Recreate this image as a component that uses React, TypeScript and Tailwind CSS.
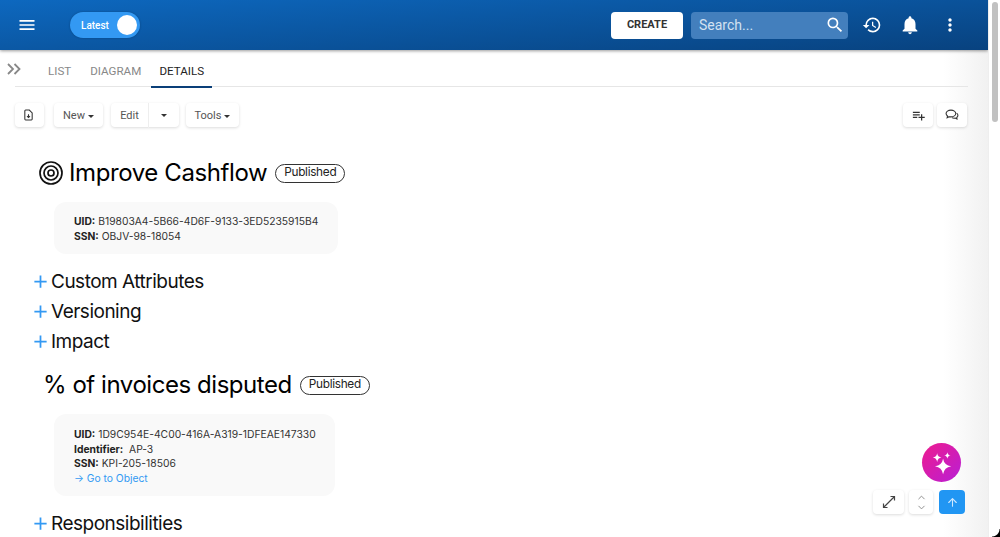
import React from "react";
import { ChevronUp, ChevronDown, ArrowUp } from "lucide-react";
import { MdMenu, MdSearch, MdHistory, MdNotifications, MdMoreVert, MdPlaylistAdd, MdAdd } from "react-icons/md";

const Caret = () => <span className="inline-block w-0 h-0 border-x-[3.5px] border-x-transparent border-t-[3.5px] border-t-[#333]" />;
const Btn = ({ children, className = "" }: { children: React.ReactNode; className?: string }) => (
  <div className={`h-6 flex items-center justify-center bg-white rounded shadow-[0_1px_3px_rgba(0,0,0,0.14)] text-[11px] text-[#555] ${className}`}>{children}</div>
);
const Section = ({ label, className = "" }: { label: string; className?: string }) => (
  <div className={`flex items-center h-[30px] shrink-0 ${className}`}>
    <MdAdd size={21} className="text-[#3399f3] ml-[30px] -mt-[2px]" />
    <span className="text-[19px] tracking-[-0.5px] text-[#111]">{label}</span>
  </div>
);
const Badge = () => (
  <span className="h-[19px] px-2 flex items-center rounded-full border border-[#333] text-[11.8px] tracking-[-0.3px] text-[#222]">Published</span>
);

export default function App() {
  return (
    <div className="relative w-[1000px] h-[537px] overflow-hidden flex bg-white font-['Inter',sans-serif]">
      <div className="w-[988px] flex flex-col bg-[linear-gradient(90deg,#fff_95.5%,#f1f1f1_100%)]">
        <header className="h-[50px] shrink-0 flex items-center bg-[linear-gradient(176deg,#0d68bf_0%,#08427f_100%)] shadow-[0_1px_3px_rgba(0,0,0,0.4)] font-['Roboto',sans-serif]">
          <MdMenu size={20} className="text-white ml-[17px]" />
          <div className="ml-[33px] w-[70px] h-[26px] rounded-full bg-[#3399f3] flex items-center justify-between pl-[11px] pr-[3px] shadow-[0_0_2px_rgba(0,0,0,0.3)]">
            <span className="text-[10px] font-medium text-white">Latest</span>
            <span className="w-5 h-5 rounded-full bg-white" />
          </div>
          <div className="ml-auto w-[72px] h-[27px] rounded bg-white flex items-center justify-center text-[11px] font-bold text-[#333]">CREATE</div>
          <div className="ml-2 w-[157px] h-[27px] rounded bg-[#437fbd] flex items-center justify-between pl-2 pr-[3px]">
            <span className="text-[14px] text-[#d3e2f1]">Search...</span>
            <MdSearch size={20} className="text-white" />
          </div>
          <MdHistory size={20} className="text-white ml-[14px]" />
          <MdNotifications size={22} className="text-white ml-[17px]" />
          <MdMoreVert size={20} className="text-white ml-[19px] mr-[28px]" />
        </header>
        <div className="h-[37px] shrink-0 flex ml-[15px] mr-[20px] border-b border-[#e6e6e6] relative text-[11.6px] font-['Roboto',sans-serif]">
          <svg width="16" height="12" viewBox="0 0 16 12" fill="none" stroke="#888" strokeWidth="1.8" className="absolute left-[-8px] top-[13px]">
            <path d="M1 1l5 5-5 5M7.500 1l5 5-5 5" />
          </svg>
          <div className="ml-[33px] mt-[13px] text-[#888]">LIST</div>
          <div className="ml-[19px] mt-[13px] text-[#888]">DIAGRAM</div>
          <div className="ml-[10px] w-[61px] text-center pt-[13px] text-[#222] border-b-2 border-[#0a3f78] h-[38px]">DETAILS</div>
        </div>
        <div className="flex shrink-0 mt-[16px] ml-[15px] mr-[21px] items-center font-['Roboto',sans-serif]">
          <Btn className="w-[29px]">
            <svg width="9" height="12" viewBox="0 0 11 13" fill="none" stroke="#333" strokeWidth="1.3" className="-ml-[3px]">
              <path d="M1 1.500a1 1 0 0 1 1-1h4.500L10 4v7.500a1 1 0 0 1-1 1H2a1 1 0 0 1-1-1zM5.500 5.500v4M3.700 7.800l1.800 1.800 1.800-1.800" />
            </svg>
          </Btn>
          <Btn className="w-[49px] ml-[10px] gap-[3px] pt-[2px]">New <Caret /></Btn>
          <Btn className="w-[68px] ml-[8px]"><span className="flex-1 text-center border-r border-[#eee] leading-6 pt-px">Edit</span><span className="w-[30px] flex justify-center"><Caret /></span></Btn>
          <Btn className="w-[53px] ml-[7px] gap-[3px] pt-[2px]">Tools <Caret /></Btn>
          <Btn className="w-[30px] ml-auto"><MdPlaylistAdd size={15} className="text-[#333]" /></Btn>
          <Btn className="w-[30px] ml-[4px]">
            <svg width="14" height="13" viewBox="0 0 13 12" fill="none" stroke="#333" strokeWidth="1">
              <path d="M5.500 1C3 1 1 2.400 1 4.200c0 .9.500 1.700 1.300 2.300L2 8l1.800-.9c.5.100 1.100.2 1.700.2 2.500 0 4.500-1.400 4.500-3.100S8 1 5.500 1z" />
              <path d="M10.800 3.800c.8.500 1.200 1.200 1.200 2 0 .8-.4 1.500-1.100 2l.2 1.400-1.600-.8c-1 .2-2.200.1-3.100-.4" />
            </svg>
          </Btn>
        </div>
        <div className="flex shrink-0 items-center mt-[29px] ml-[39px] h-[34px]">
          <svg width="24" height="24" viewBox="0 0 24 24" fill="none" stroke="#111" strokeWidth="1.7">
            <circle cx="12" cy="12" r="11" /><circle cx="12" cy="12" r="7" /><circle cx="12" cy="12" r="3" />
          </svg>
          <h1 className="ml-[6px] text-[24px] tracking-[-0.4px] text-black">Improve Cashflow</h1>
          <span className="ml-2"><Badge /></span>
        </div>
        <div className="shrink-0 mt-[12px] ml-[54px] w-[284px] h-[52px] rounded-xl bg-[#f9f9f9] px-5 py-[12px] text-[10.3px] leading-[14.5px] text-[#333] whitespace-nowrap">
          <div><b className="text-[#222]">UID:</b> B19803A4-5B66-4D6F-9133-3ED5235915B4</div>
          <div><b className="text-[#222]">SSN:</b> OBJV-98-18054</div>
        </div>
        <Section label="Custom Attributes" className="mt-[13px]" />
        <Section label="Versioning" />
        <Section label="Impact" />
        <div className="flex shrink-0 items-center mt-[11px] ml-[43px] h-[34px]">
          <h2 className="text-[24px] tracking-[-0.45px] text-black">% of invoices disputed</h2>
          <span className="ml-[8px]"><Badge /></span>
        </div>
        <div className="shrink-0 mt-[12px] ml-[54px] w-[281px] h-[82px] rounded-xl bg-[#f9f9f9] px-5 pt-[13px] text-[10.3px] leading-[14.5px] text-[#333] whitespace-nowrap">
          <div><b className="text-[#222]">UID:</b> 1D9C954E-4C00-416A-A319-1DFEAE147330</div>
          <div><b className="text-[#222]">Identifier:</b>&nbsp; AP-3</div>
          <div><b className="text-[#222]">SSN:</b> KPI-205-18506</div>
          <div className="text-[#3399f3]">→ Go to Object</div>
        </div>
        <Section label="Responsibilities" className="mt-[13px]" />
      </div>
      <div className="w-[12px] bg-white border-l border-[#eee] relative">
        <div className="absolute left-[3px] top-[2px] w-[6px] h-[120px] rounded bg-[#c1c1c1]" />
      </div>
      <div className="absolute right-0 bottom-0 w-[8px] h-[8px] bg-[radial-gradient(circle_at_0_0,transparent_7px,#000_8px)]" />

      <div className="absolute left-[922px] top-[443px] w-[39px] h-[39px] rounded-full bg-[linear-gradient(135deg,#ee1b8e,#b81fd6)] flex items-center justify-center">
        <svg width="28" height="28" viewBox="0 0 26 26" fill="white">
          <path d="M14 9 Q15 15 21.500 16 Q15 17 14 23.500 Q13 17 6.500 16 Q13 15 14 9Z" />
          <path d="M8.500 4 Q9 7.500 12.500 8 Q9 8.500 8.500 12 Q8 8.500 4.500 8 Q8 7.500 8.500 4Z" />
          <path d="M18 3 Q18.300 5.700 21 6 Q18.300 6.300 18 9 Q17.700 6.300 15 6 Q17.700 5.700 18 3Z" />
        </svg>
      </div>
      <div className="absolute left-[873px] top-[490px] flex items-center">
        <Btn className="w-[31px] h-[24px]">
          <svg width="16" height="16" viewBox="0 0 16 16" fill="none" stroke="#444" strokeWidth="1.2"><path d="M2.500 13.500 13.500 2.500M9.500 2.500h4v4M2.500 9.500v4h4" /></svg>
        </Btn>
        <Btn className="w-[24px] h-[24px] ml-[5px] flex-col">
          <ChevronUp size={11} className="text-[#888] -mb-[1px]" />
          <ChevronDown size={11} className="text-[#888]" />
        </Btn>
        <div className="w-[26px] h-[24px] ml-[6px] rounded bg-[#2196f3] flex items-center justify-center">
          <ArrowUp size={13} className="text-[#cfe8ff]" />
        </div>
      </div>
    </div>
  );
}
